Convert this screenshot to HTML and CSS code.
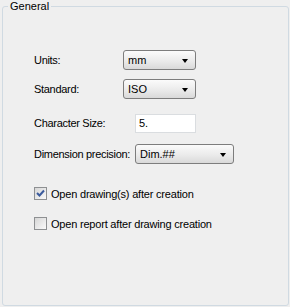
FILE: index.html
```html
<!DOCTYPE html>
<html lang="en">
<head>
    <meta charset="UTF-8">
    <title>General</title>
    <link rel="stylesheet" href="styles.css">
</head>
<body>
    <fieldset class="group">
        <legend class="group-title">General</legend>

        <div class="row row-units">
            <span class="lbl lbl-short">Units:</span>
            <div class="combo combo-small"><span>mm</span><i class="arrow"></i></div>
        </div>

        <div class="row row-standard">
            <span class="lbl lbl-short">Standard:</span>
            <div class="combo combo-small"><span>ISO</span><i class="arrow"></i></div>
        </div>

        <div class="row row-size">
            <span class="lbl lbl-long">Character Size:</span>
            <div class="textbox">5.</div>
        </div>

        <div class="row row-precision">
            <span class="lbl lbl-long">Dimension precision:</span>
            <div class="combo combo-wide"><span>Dim.##</span><i class="arrow"></i></div>
        </div>

        <label class="check row-check1">
            <span class="box">
                <svg width="11" height="11" viewBox="0 0 11 11"><path d="M2 5 L4.5 7.5 L9 2.5" fill="none" stroke="#3b5b9d" stroke-width="2"/></svg>
            </span>
            Open drawing(s) after creation
        </label>

        <label class="check row-check2">
            <span class="box"></span>
            Open report after drawing creation
        </label>
    </fieldset>
</body>
</html>
```

FILE: styles.css
```css
html, body {
    margin: 0;
    padding: 0;
    background-color: #efefef;
}

body {
    font-family: "Liberation Sans", Arial, sans-serif;
    font-size: 11px;
    color: #000;
    width: 290px;
    height: 307px;
    overflow: hidden;
}

.group {
    margin: 0 1px 0 2px;
    padding: 0;
    height: 306px;
    box-sizing: border-box;
    border: 1px solid #d0dae2;
    border-radius: 3px;
}

.group-title {
    margin-left: 5px;
    padding: 0 2px;
    line-height: 13px;
}

.row {
    display: flex;
    align-items: center;
    height: 20px;
    padding-left: 31px;
}

.row-units { margin-top: 37px; }
.row-standard { margin-top: 9px; }
.row-size { margin-top: 14px; }
.row-precision { margin-top: 11px; }

.lbl {
    letter-spacing: -0.3px;
}
.lbl-short { width: 89px; }
.lbl-long { width: 101px; }

.combo {
    position: relative;
    height: 20px;
    box-sizing: border-box;
    border: 1px solid #7d7d7d;
    border-radius: 3px;
    background: linear-gradient(#fbfbfb, #e9e9e9 60%, #d9d9d9);
    display: flex;
    align-items: center;
    padding-left: 4px;
}
.combo-small { width: 73px; }
.combo-wide { width: 99px; }

.arrow {
    position: absolute;
    right: 7px;
    top: 8px;
    width: 0;
    height: 0;
    border-left: 3.5px solid transparent;
    border-right: 3.5px solid transparent;
    border-top: 4px solid #000;
}

.textbox {
    width: 61px;
    height: 19px;
    box-sizing: border-box;
    border: 1px solid #dadde0;
    background-color: #fff;
    padding-left: 3px;
    line-height: 17px;
}

.check {
    display: flex;
    align-items: center;
    height: 13px;
    padding-left: 31px;
    letter-spacing: -0.2px;
}
.row-check1 { margin-top: 23px; }
.row-check2 { margin-top: 17px; }

.box {
    width: 13px;
    height: 13px;
    box-sizing: border-box;
    border: 1px solid #8e9092;
    background: linear-gradient(135deg, #d6d6d6, #fafafa);
    margin-right: 4px;
    display: flex;
    align-items: center;
    justify-content: center;
}
```
